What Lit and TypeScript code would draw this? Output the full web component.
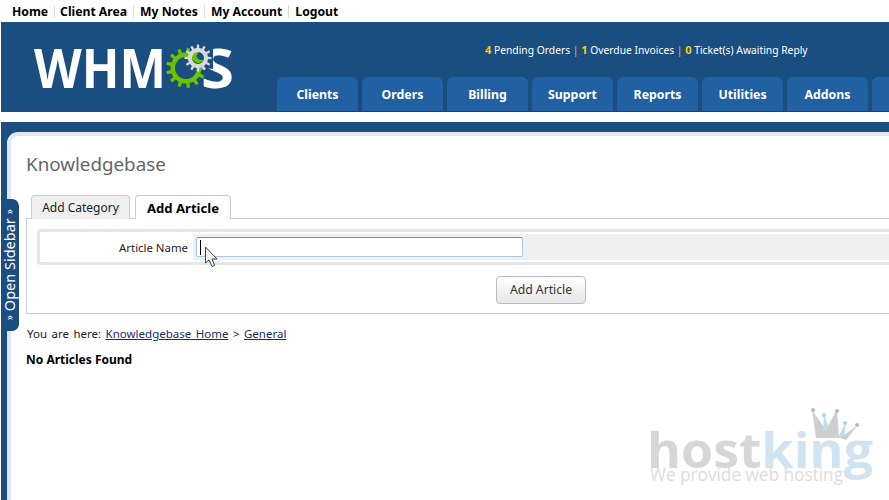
import { LitElement, html, css, svg } from "lit";
import { customElement } from "lit/decorators.js";

const gear = (cx: number, cy: number, ro: number, ri: number, n: number) => {
  let d = "";
  for (let i = 0; i < n; i++) {
    const s = (Math.PI * 2) / n;
    const a = i * s;
    const pts = [
      [ri, a - s * 0.5],
      [ri, a - s * 0.24],
      [ro, a - s * 0.16],
      [ro, a + s * 0.16],
      [ri, a + s * 0.24],
    ];
    for (const [r, t] of pts) d += `${d ? "L" : "M"}${(cx + r * Math.cos(t)).toFixed(1)} ${(cy + r * Math.sin(t)).toFixed(1)}`;
  }
  return d + "Z";
};

@customElement("app-root")
export class AppRoot extends LitElement {
  static styles = css`
    :host { display: block; position: relative; width: 889px; height: 500px; overflow: hidden; background: #fff; font-family: "Noto Sans", "DejaVu Sans", sans-serif; font-size: 12px; color: #111; }
    .top { display: flex; align-items: center; height: 22px; padding-left: 12px; font-weight: 700; font-size: 12.2px; color: #000; }
    .top span { padding-right: 6px; margin-right: 6px; border-right: 1px solid #ddd; line-height: 13px; }
    .top span:first-child { margin-right: 5px; }
    .top span:last-child { border: 0; }
    .header { margin-left: 1px; height: 90px; background: #1a4d80; display: flex; }
    .logo { width: 276px; flex: none; }
    .logo svg { display: block; }
    .right { flex: 1; min-width: 0; display: flex; flex-direction: column; }
    .stats { height: 55px; padding: 20px 0 0 208px; box-sizing: border-box; color: #fff; font-size: 10.3px; white-space: nowrap; line-height: 15px; }
    .stats b { color: #fc0; font-size: 11px; }
    .stats i { color: #e8b560; font-style: normal; }
    .tabs { display: flex; gap: 4px; height: 34px; white-space: nowrap; }
    .tabs div { flex: none; width: 81px; height: 34px; box-sizing: border-box; background: #2160a3; border-radius: 6px 6px 0 0; color: #fff; font-weight: 700; font-size: 12.3px; display: flex; align-items: center; justify-content: center; }
    .rule { height: 1px; background: #174470; }
    .gapw { height: 10px; }
    .wrap { margin-left: 1px; background: #1a4d80; padding: 10px 0 0 0; height: 378px; box-sizing: border-box; }
    .frame { height: 100%; margin-left: 6px; background: #e3e7ea; border-radius: 11px 0 0 0; padding: 4px 0 0 4px; box-sizing: border-box; }
    .panel { height: 100%; background: #fff; border-radius: 8px 0 0 0; padding: 14px 0 0 15px; box-sizing: border-box; }
    h1 { margin: 0; font-weight: 400; font-size: 18.8px; line-height: 28px; color: #666; }
    .ttabs { display: flex; gap: 5px; margin: 17px 0 0 5px; height: 24px; position: relative; z-index: 1; }
    .ttab { box-sizing: border-box; width: 99px; height: 24px; text-align: center; border: 1px solid #ccc; border-bottom: 0; border-radius: 4px 4px 0 0; background: #efefef; line-height: 24px; font-size: 12px; color: #222; }
    .ttab.on { width: 96px; background: #fff; font-weight: 700; color: #000; font-size: 13.1px; }
    .box { border: 1px solid #ccc; border-right: 0; height: 96px; box-sizing: border-box; padding: 10px 0 0 10px; margin-top: -1px; }
    .form { display: flex; height: 36px; box-sizing: border-box; border: 3px solid #e3e7ea; border-right: 0; border-radius: 4px 0 0 4px; padding: 2px 0; background: #fff; }
    .lab { width: 153px; flex: none; text-align: right; padding-right: 5px; box-sizing: border-box; line-height: 27px; font-size: 11.4px; color: #222; }
    .fld { flex: 1; background: #efefef; padding: 3px 0 0 3px; }
    .inp { width: 327px; height: 20px; box-sizing: border-box; border: 1px solid #a9cbe3; border-top-color: #5a9ac8; border-radius: 2px; background: #fff; padding: 2px 0 0 3px; }
    .inp u { display: block; width: 1px; height: 15px; background: #000; }
    .act { display: flex; justify-content: center; width: 1008px; margin-top: 11px; }
    .btn { width: 90px; height: 28px; box-sizing: border-box; border: 1px solid #bbb; border-radius: 4px; background: linear-gradient(#fff, #e6e6e6); text-align: center; line-height: 26px; font-size: 12.2px; color: #333; }
    .crumb { margin-top: 12px; font-size: 11.5px; word-spacing: 1.5px; line-height: 16px; padding-left: 1px; color: #222; }
    .crumb a { color: #1b2a6b; text-decoration: underline; }
    .none { margin-top: 9px; font-weight: 700; font-size: 12px; line-height: 17px; color: #000; }
    .side { position: absolute; left: 1px; top: 199px; width: 18px; height: 132px; background: #1a4d80; border-radius: 0 7px 7px 0; display: flex; align-items: center; justify-content: center; }
    .side span { display: flex; align-items: center; gap: 4px; writing-mode: vertical-rl; transform: rotate(180deg); color: #fff; font-size: 14.5px; white-space: nowrap; line-height: 14px; padding-top: 1px; margin-right: 3px; }
    .side small { font-size: 10px; }
    .cursor { position: absolute; left: 204px; top: 246px; }
    .mark { position: absolute; left: 640px; top: 400px; }
    .hk { font: 700 48px "Open Sans", sans-serif; fill: #d6d6d6; }
    .hk tspan { fill: #cfe3f0; }
    .tag { font: 400 18px "Open Sans", sans-serif; fill: #dcdcdc; }
    .lw { font: 700 53px "Open Sans", "Liberation Sans", sans-serif; fill: #fff; }
  `;

  render() {
    return html`
      <div class="top"><span>Home</span><span>Client Area</span><span>My Notes</span><span>My Account</span><span>Logout</span></div>
      <div class="header">
        <div class="logo">
          <svg width="276" height="90" viewBox="0 0 276 90">
            <text class="lw" x="33" y="66" textLength="132" lengthAdjust="spacingAndGlyphs">WHM</text>
            <text class="lw" x="200" y="66" textLength="33" lengthAdjust="spacingAndGlyphs">S</text>
            <path fill-rule="evenodd" fill="#6cc200" d="${gear(185, 46, 20, 15.5, 13)} M185 35a11 11 0 1 0 11 11a11 11 0 0 0-11-11Z"></path>
            <path fill="#1a4d80" d="M185 46 L212 24 L212 47 L199 45Z"></path>
            <path fill-rule="evenodd" fill="#d9d9d9" d="${gear(197, 36, 13.5, 10, 12)} M197 30a6 6 0 1 0 6 6a6 6 0 0 0-6-6Z"></path>
            <path fill="#6cc200" d="M191.500 34a5.800 5.800 0 0 0 11 3.500a6 6 0 0 1-6 -1Z"></path>
          </svg>
        </div>
        <div class="right">
          <div class="stats"><b>4</b> Pending Orders <i>|</i> <b>1</b> Overdue Invoices <i>|</i> <b>0</b> Ticket(s) Awaiting Reply</div>
          <div class="tabs"><div>Clients</div><div>Orders</div><div>Billing</div><div>Support</div><div>Reports</div><div>Utilities</div><div>Addons</div><div></div></div>
          <div class="rule"></div>
        </div>
      </div>
      <div class="gapw"></div>
      <div class="wrap"><div class="frame"><div class="panel">
        <h1>Knowledgebase</h1>
        <div class="ttabs"><div class="ttab">Add Category</div><div class="ttab on">Add Article</div></div>
        <div class="box">
          <div class="form"><div class="lab">Article Name</div><div class="fld"><div class="inp"><u></u></div></div></div>
          <div class="act"><div class="btn">Add Article</div></div>
        </div>
        <div class="crumb">You are here: <a>Knowledgebase Home</a> &gt; <a>General</a></div>
        <div class="none">No Articles Found</div>
      </div></div></div>
      <div class="side"><span><small>»</small>Open Sidebar<small>»</small></span></div>
      <svg class="cursor" width="15" height="22" viewBox="0 0 15 22"><path d="M1.500 1 L1.500 17 L5 14 L8 20.500 L10.500 19.500 L8 13 L13 13 Z" fill="#f4f4f4" stroke="#444" stroke-width="1"></path></svg>
      <svg class="mark" width="249" height="100" viewBox="0 0 249 100">${svg`
        <path d="M176 38 L172 10 L186 30 L197 9 L199 38 Z" fill="#cfcfcf"></path>
        <path d="M183 30 L184 14 L189 28Z M198 38 L206 22 L204 38Z" fill="#bcdcef"></path>
        <path d="M200 38 L218 25 L206 40Z" fill="#cfcfcf"></path>
        <circle cx="173" cy="10" r="2" fill="#bbb"></circle><circle cx="184" cy="15" r="2" fill="#a9d3ea"></circle><circle cx="197" cy="11" r="2" fill="#bbb"></circle><circle cx="205" cy="23" r="2" fill="#a9d3ea"></circle><circle cx="217" cy="25" r="2" fill="#bbb"></circle>
        <text class="hk" x="7" y="68" textLength="226" lengthAdjust="spacingAndGlyphs">host<tspan>king</tspan></text>
        <text class="tag" x="10" y="81" textLength="193" lengthAdjust="spacingAndGlyphs">We provide web hosting</text>
      `}</svg>
    `;
  }
}
